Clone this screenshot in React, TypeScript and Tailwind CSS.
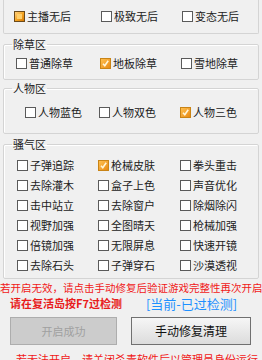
import type { ReactNode } from "react";

const font = { fontFamily: '"Noto Sans CJK SC", "Noto Sans", sans-serif' };

function Box({ checked, full }: { checked?: boolean; full?: boolean }) {
  if (full) {
    return (
      <span className="w-[11px] h-[11px] shrink-0 border border-[#6b4a1a] bg-gradient-to-br from-[#ffd27a] via-[#f5a623] to-[#d97a00] flex items-center justify-center">
        <span className="w-[5px] h-[5px] bg-[#ffcf6a]" />
      </span>
    );
  }
  if (checked) {
    return (
      <span className="w-[11px] h-[11px] shrink-0 border border-[#c98416] bg-gradient-to-br from-[#ffc04d] to-[#e88a0c] flex items-center justify-center">
        <svg width="9" height="9" viewBox="0 0 9 9">
          <path d="M2 4.8 L3.8 6.8 L7.2 1.8" fill="none" stroke="#fff6d8" strokeWidth="1.6" />
        </svg>
      </span>
    );
  }
  return <span className="w-[11px] h-[11px] shrink-0 border border-[#5a5a5a] bg-white" />;
}

function Check({ label, checked, full }: { label: string; checked?: boolean; full?: boolean }) {
  return (
    <div className="flex items-center gap-[2px] h-[14px] text-[11px] leading-[14px] text-[#222]">
      <Box checked={checked} full={full} />
      <span>{label}</span>
    </div>
  );
}

function Group({ title, children, className }: { title: string; children: ReactNode; className: string }) {
  return (
    <fieldset className={`mx-[3px] border border-[#d4d4d4] rounded-[2px] shadow-[inset_1px_1px_0_#fff] px-[8px] ${className}`}>
      <legend className="px-[1px] text-[11px] leading-[14px] text-[#222]">{title}</legend>
      {children}
    </fieldset>
  );
}

const sao: [string, boolean?][] = [
  ["子弹追踪"], ["枪械皮肤", true], ["拳头重击"],
  ["去除灌木"], ["盒子上色"], ["声音优化"],
  ["击中站立"], ["去除窗户"], ["除烟除闪"],
  ["视野加强"], ["全图晴天"], ["枪械加强"],
  ["倍镜加强"], ["无限屏息"], ["快速开镜"],
  ["去除石头"], ["子弹穿石"], ["沙漠透视"],
];

export default function App() {
  return (
    <div className="w-[262px] h-[360px] overflow-hidden bg-[#f0f0f0]" style={font}>
      <div className="mx-[3px] h-[34px] border-x border-b border-[#d4d4d4] rounded-b-[2px] pt-[9px] pl-[10px] grid grid-cols-[87px_81px_1fr]">
        <Check label="主播无后" full />
        <Check label="极致无后" />
        <Check label="变态无后" />
      </div>

      <Group title="除草区" className="mt-[3px] pt-[5px] pb-[9px]">
        <div className="grid grid-cols-[84px_81px_1fr] pl-[4px]">
          <Check label="普通除草" />
          <Check label="地板除草" checked />
          <Check label="雪地除草" />
        </div>
      </Group>

      <Group title="人物区" className="mt-[1px] pt-[10px] pb-[14px]">
        <div className="grid grid-cols-[74px_81px_1fr] pl-[13px]">
          <Check label="人物蓝色" />
          <Check label="人物双色" />
          <Check label="人物三色" checked />
        </div>
      </Group>

      <Group title="骚气区" className="mt-[3px] pt-[7px] pb-[6px]">
        <div className="grid grid-cols-[81px_82px_1fr] gap-y-[6px] pl-[5px]">
          {sao.map(([l, c]) => (
            <Check key={l} label={l} checked={c} />
          ))}
        </div>
      </Group>

      <div className="mt-[2px] text-[10.5px] leading-[13px] text-[#f01818] whitespace-nowrap">
        若开启无效，请点击手动修复后验证游戏完整性再次开启
      </div>
      <div className="mt-[2px] flex items-center h-[15px]">
        <span className="ml-[10px] text-[11px] font-bold text-[#e81c1c] leading-[15px]">请在复活岛按F7过检测</span>
        <span className="ml-[24px] text-[13px] text-[#1e90ff] leading-[15px]">[当前-已过检测]</span>
      </div>

      <div className="mt-[6px] flex pl-[10px] gap-[14px]">
        <button className="w-[107px] h-[28px] border border-[#adadad] bg-[#cccccc] text-[11px] text-[#a0a0a0]">
          开启成功
        </button>
        <button className="w-[120px] h-[28px] border border-[#707070] bg-gradient-to-b from-[#f6f6f6] to-[#dcdcdc] text-[12px] text-[#111]">
          手动修复清理
        </button>
      </div>

      <div className="mt-[7px] ml-[16px] text-[11px] leading-[14px] text-[#f01818] whitespace-nowrap">
        若无法开启，请关闭杀毒软件后以管理员身份运行
      </div>
    </div>
  );
}
